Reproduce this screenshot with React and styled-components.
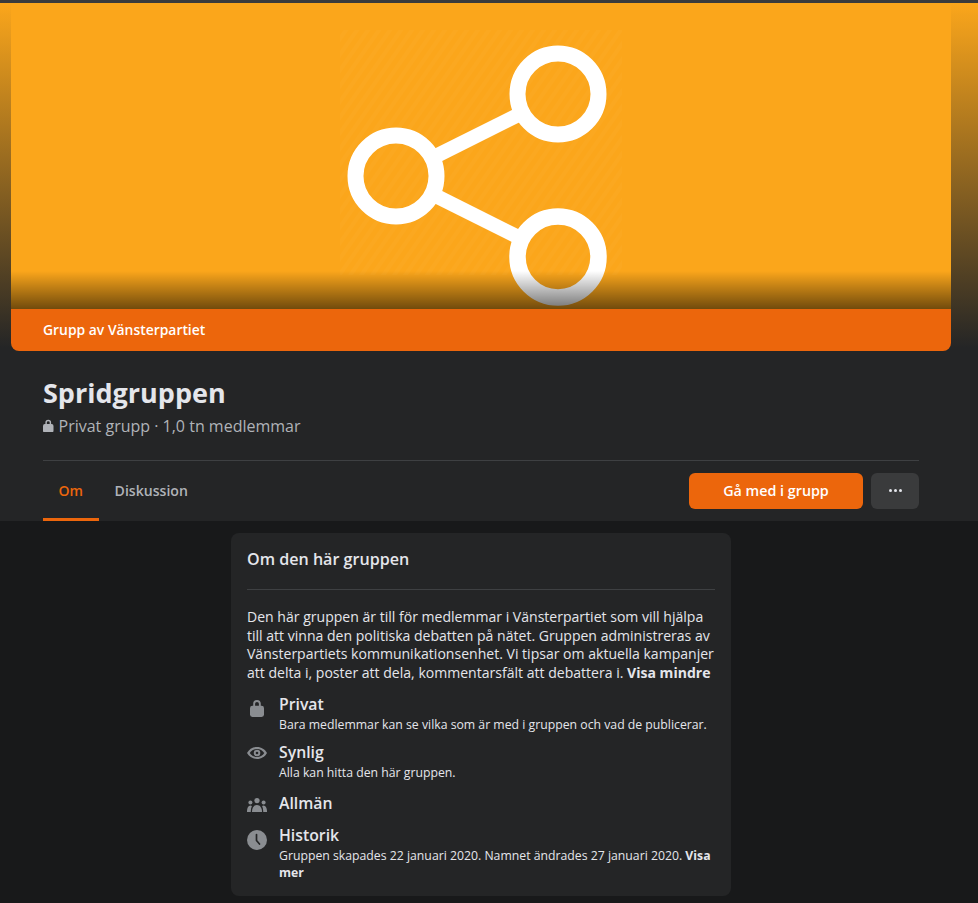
import styled, { createGlobalStyle } from 'styled-components'

const FONT = '"Open Sans", "Noto Sans", "Liberation Sans", sans-serif'

const GlobalStyle = createGlobalStyle`
  html, body {
    margin: 0;
    padding: 0;
    background: #18191a;
    font-family: ${FONT};
  }
  * {
    box-sizing: border-box;
  }
`

function LockIcon({ size = 16 }) {
  return (
    <svg width={size * 0.875} height={size * 1.125} viewBox="0 0 14 18" fill="currentColor">
      <path d="M3.2 7V4.8a3.8 3.8 0 0 1 7.6 0V7h-1.9V4.8a1.9 1.9 0 0 0-3.8 0V7z" />
      <rect x="0" y="6.8" width="14" height="11.2" rx="2.4" />
    </svg>
  )
}

function EyeIcon() {
  return (
    <svg width="20" height="12" viewBox="0 0 20 12">
      <path fill="currentColor" d="M10 0C5.6 0 2 2.400 0 6c2 3.600 5.600 6 10 6s8-2.400 10-6c-2-3.600-5.600-6-10-6z" />
      <path fill="#242526" d="M10 1.900C7 1.900 4.400 3.500 2.700 6c1.700 2.500 4.300 4.100 7.300 4.100s5.600-1.600 7.300-4.100C15.600 3.500 13 1.900 10 1.900z" />
      <circle cx="10" cy="6" r="3.300" fill="currentColor" />
      <circle cx="10" cy="6" r="1.300" fill="#242526" />
    </svg>
  )
}

function PeopleIcon() {
  return (
    <svg width="20" height="14" viewBox="0 0 20 14" fill="currentColor">
      <circle cx="10" cy="2.600" r="2.600" />
      <circle cx="3.400" cy="4.400" r="2" />
      <circle cx="16.600" cy="4.400" r="2" />
      <path d="M5 14c-.1-4 1.900-7 5-7s5.100 3 5 7z" />
      <path d="M3.800 14H0c-.2-3 1-6.500 3.400-6.500.6 0 1.100.2 1.500.5-.8 1.600-1.200 3.600-1.100 6z" />
      <path d="M16.200 14H20c.2-3-1-6.500-3.400-6.500-.6 0-1.100.2-1.500.5.8 1.600 1.200 3.600 1.100 6z" />
    </svg>
  )
}

function ClockIcon() {
  return (
    <svg width="20" height="20" viewBox="0 0 20 20">
      <circle cx="10" cy="10" r="10" fill="currentColor" />
      <path d="M9.500 4.500V10.500L12.500 14" fill="none" stroke="#242526" strokeWidth="1.700" strokeLinecap="round" strokeLinejoin="round" />
    </svg>
  )
}

function ShareArt() {
  return (
    <HeroArt viewBox="0 0 940 306" preserveAspectRatio="none">
      <defs>
        <pattern id="hatch" width="9" height="9" patternUnits="userSpaceOnUse" patternTransform="rotate(35)">
          <rect width="4" height="9" fill="#ffffff" fillOpacity="0.022" />
        </pattern>
      </defs>
      <rect x="329" y="27" width="282" height="245" fill="url(#hatch)" />
      <g fill="none" stroke="#ffffff">
        <circle cx="547" cy="91" r="40.500" strokeWidth="16" />
        <circle cx="385" cy="173" r="40.500" strokeWidth="16" />
        <circle cx="547" cy="254" r="40.500" strokeWidth="16.500" />
        <path d="M421 155L511 110M421 191L511 236" strokeWidth="14.500" />
      </g>
    </HeroArt>
  )
}

const rows = [
  { icon: <LockIcon />, title: 'Privat', text: 'Bara medlemmar kan se vilka som är med i gruppen och vad de publicerar.' },
  { icon: <EyeIcon />, title: 'Synlig', text: 'Alla kan hitta den här gruppen.' },
  { icon: <PeopleIcon />, title: 'Allmän', compact: true },
  {
    icon: <ClockIcon />,
    title: 'Historik',
    text: 'Gruppen skapades 22 januari 2020. Namnet ändrades 27 januari 2020. ',
    more: 'Visa mer',
  },
]

export default function App() {
  return (
    <>
      <GlobalStyle />
      <Page>
        <TopBar />
        <Header>
          <Cover>
            <Hero>
              <ShareArt />
              <HeroShade />
            </Hero>
            <CoverBar>Grupp av Vänsterpartiet</CoverBar>
          </Cover>
          <HeaderBody>
            <GroupName>Spridgruppen</GroupName>
            <GroupMeta>
              <LockIcon size={12} />
              Privat grupp · 1,0 tn medlemmar
            </GroupMeta>
            <TabRow>
              <Tabs>
                <Tab $active>Om</Tab>
                <Tab>Diskussion</Tab>
              </Tabs>
              <Actions>
                <JoinButton>Gå med i grupp</JoinButton>
                <MoreButton aria-label="Mer">
                  <Dot />
                  <Dot />
                  <Dot />
                </MoreButton>
              </Actions>
            </TabRow>
          </HeaderBody>
        </Header>
        <AboutCard>
          <CardTitle>Om den här gruppen</CardTitle>
          <CardBody>
            Den här gruppen är till för medlemmar i Vänsterpartiet som vill hjälpa
            <br />
            till att vinna den politiska debatten på nätet. Gruppen administreras av
            <br />
            Vänsterpartiets kommunikationsenhet. Vi tipsar om aktuella kampanjer
            <br />
            att delta i, poster att dela, kommentarsfält att debattera i. <strong>Visa mindre</strong>
          </CardBody>
          <InfoList>
            {rows.map((row) => (
              <InfoRow key={row.title} $compact={row.compact}>
                <InfoIcon>{row.icon}</InfoIcon>
                <div>
                  <InfoTitle>{row.title}</InfoTitle>
                  {row.text && (
                    <InfoText>
                      {row.text}
                      {row.more && <strong>{row.more}</strong>}
                    </InfoText>
                  )}
                </div>
              </InfoRow>
            ))}
          </InfoList>
        </AboutCard>
      </Page>
    </>
  )
}

const Page = styled.div`
  width: 978px;
  height: 903px;
  overflow: hidden;
  background: #18191a;
`

const TopBar = styled.div`
  height: 3px;
  background: #3a3b3c;
`

const Header = styled.header`
  height: 518px;
  background: linear-gradient(to bottom, #fba61b 0, #242526 345px);
`

const Cover = styled.div`
  width: 940px;
  margin-left: 11px;
  border-radius: 0 0 8px 8px;
  overflow: hidden;
`

const Hero = styled.div`
  position: relative;
  height: 306px;
  background: #fba61b;
`

const HeroArt = styled.svg`
  display: block;
  width: 100%;
  height: 100%;
`

const HeroShade = styled.div`
  position: absolute;
  left: 0;
  right: 0;
  bottom: 0;
  height: 38px;
  background: linear-gradient(to bottom, rgba(0, 0, 0, 0), rgba(0, 0, 0, 0.55));
`

const CoverBar = styled.div`
  height: 42px;
  padding-left: 32px;
  background: #ec660c;
  color: #ffffff;
  font-size: 13.900px;
  font-weight: 600;
  line-height: 42px;
`

const HeaderBody = styled.div`
  height: 170px;
  margin: 0 59px 0 43px;
`

const GroupName = styled.h1`
  margin: 0;
  padding-top: 21px;
  color: #e4e6eb;
  font-size: 27px;
  font-weight: 700;
  line-height: 42px;
`

const GroupMeta = styled.div`
  display: flex;
  align-items: center;
  gap: 5px;
  height: 24px;
  color: #b0b3b8;
  font-size: 16px;
  line-height: 24px;
  svg {
    flex: none;
    margin-top: -1px;
  }
`

const TabRow = styled.div`
  display: flex;
  align-items: center;
  justify-content: space-between;
  height: 61px;
  margin-top: 22px;
  border-top: 1px solid #3e4042;
`

const Tabs = styled.nav`
  display: flex;
  height: 100%;
`

const Tab = styled.a`
  display: flex;
  align-items: center;
  height: 100%;
  padding: 2px 16px 0 15.500px;
  border-bottom: 3px solid ${({ $active }) => ($active ? '#ec660c' : 'transparent')};
  color: ${({ $active }) => ($active ? '#ec660c' : '#b0b3b8')};
  font-size: 14.100px;
  font-weight: 600;
`

const Actions = styled.div`
  display: flex;
  gap: 8px;
  margin-top: -1px;
`

const JoinButton = styled.button`
  width: 174px;
  height: 36px;
  border: 0;
  border-radius: 6px;
  background: #ec660c;
  color: #ffffff;
  font-family: inherit;
  font-size: 14.300px;
  font-weight: 600;
`

const MoreButton = styled.button`
  display: flex;
  align-items: center;
  justify-content: center;
  gap: 2px;
  width: 48px;
  height: 36px;
  padding: 0;
  border: 0;
  border-radius: 6px;
  background: #3a3b3c;
`

const Dot = styled.span`
  width: 3px;
  height: 3px;
  border-radius: 50%;
  background: #e4e6eb;
`

const AboutCard = styled.section`
  width: 500px;
  height: 363px;
  margin: 12px 0 0 231px;
  padding: 0 16px;
  border-radius: 8px;
  background: #242526;
`

const CardTitle = styled.h2`
  height: 57px;
  margin: 0;
  padding-top: 14px;
  border-bottom: 1px solid #3e4042;
  color: #e4e6eb;
  font-size: 16.100px;
  font-weight: 600;
  line-height: 24px;
`

const CardBody = styled.p`
  margin: 18px 0 0;
  color: #e4e6eb;
  font-size: 14.050px;
  line-height: 18.700px;
  white-space: nowrap;
  strong {
    font-weight: 700;
  }
`

const InfoList = styled.div`
  display: flex;
  flex-direction: column;
  gap: 9px;
  margin-top: 11px;
`

const InfoRow = styled.div`
  display: flex;
  gap: 12px;
  padding: ${({ $compact }) => ($compact ? '3px 0' : '0')};
`

const InfoIcon = styled.div`
  display: flex;
  align-items: flex-start;
  justify-content: center;
  flex: none;
  width: 20px;
  padding-top: 5px;
  color: #8a8d91;
`

const InfoTitle = styled.div`
  color: #e4e6eb;
  font-size: 15.800px;
  font-weight: 600;
  line-height: 20px;
`

const InfoText = styled.div`
  margin-top: 2px;
  color: #e4e6eb;
  font-size: 12.250px;
  line-height: 17px;
  strong {
    font-weight: 700;
  }
`
